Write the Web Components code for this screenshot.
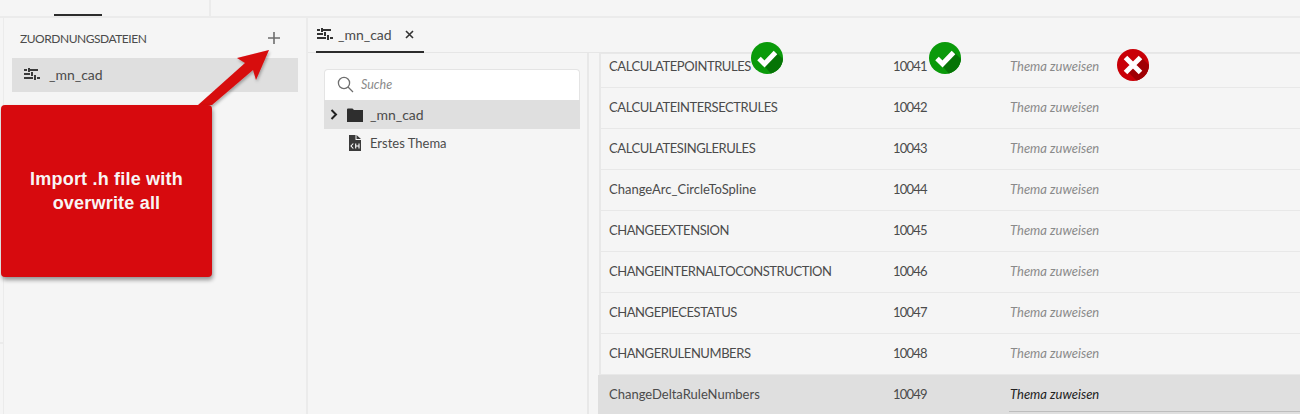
<!DOCTYPE html>
<html lang="de"><head><meta charset="utf-8"><title>Zuordnung</title>
<style>html,body{margin:0;padding:0;height:414px;overflow:hidden;background:#f5f5f5}</style></head>
<body>
<x-app></x-app>
<script>
const FONT = `"Lato","Noto Sans",sans-serif`;
const MAP = `<svg width="16" height="12" viewBox="0 0 16 12" fill="currentColor"><path d="M0 1h3v2H0zM4 0h2v4H4zM6 1h8v2H6zM0 5h6v2H0zM7 4h2v4H7zM0 9h9v2H0zM10 7h2v5h-2zM13 9h3v2h-3z"/></svg>`;
function def(name, css, html){
  customElements.define(name, class extends HTMLElement{
    constructor(){super();const r=this.attachShadow({mode:'open'});r.innerHTML=`<style>${css}</style>${typeof html==='function'?html(this):html}`;}
  });
}
def('x-topbar',`:host{display:flex;height:16px;border-bottom:2px solid #ebebeb;box-sizing:content-box}
 .a{width:54px}.t{width:48px;border-bottom:2px solid #2c2c2c}.b{width:107px;border-right:2px solid #ebebeb}`,
 `<div class="a"></div><div class="t"></div><div class="b"></div>`);
def('x-rail',`:host{display:block;width:3px;flex:none;padding-top:324px;box-sizing:border-box}div{height:2px;background:#ebebeb}`,`<div></div>`);
def('x-side-item',`:host{display:flex;align-items:center;height:34px;box-sizing:border-box;padding:0 0 2px 12px;margin:0 8px;background:#dfdfdf;color:#4b4b4b;font-size:14px;gap:9px}svg{display:block;color:#3a3a3a}`,
 `${MAP}<slot></slot>`);
def('x-sidebar',`:host{display:block;width:302px;border-left:1px solid #ebebeb;border-right:2px solid #ebebeb;box-sizing:content-box}
 header{display:flex;align-items:center;justify-content:space-between;height:40px;padding:0 26px 0 16px;color:#4b4b4b;font-size:12px;letter-spacing:-.47px}
 svg{display:block}`,
 `<header><span>ZUORDNUNGSDATEIEN</span><svg width="12" height="12" viewBox="0 0 12 12" fill="#6e6e6e"><path d="M5.200 0h1.600v12H5.200zM0 5.200h12v1.600H0z"/></svg></header><slot></slot>`);
def('x-tabbar',`:host{display:flex;height:34px;border-bottom:1px solid #e6e6e6;padding-left:8px}
 .tab{display:flex;align-items:center;gap:5px;width:108px;box-sizing:border-box;height:35px;border-bottom:2px solid #2c2c2c;color:#4b4b4b;font-size:14px;padding:0 0 1px 1px}
 .x{margin-left:8px;display:block}svg{display:block;color:#333}`,
 `<div class="tab">${MAP}<span>_mn_cad</span><svg class="x" width="9" height="9" viewBox="0 0 9 9" stroke="#333" stroke-width="1.600"><path d="M1 1l7 7M8 1l-7 7"/></svg></div>`);
def('x-search',`:host{display:flex;align-items:center;height:31px;box-sizing:border-box;margin:0 7px 0 16px;background:#fff;border:1px solid #e4e4e4;border-bottom:0;border-radius:4px 4px 0 0;padding:0 0 1px 12px;gap:7px;color:#8a8a8a;font-size:12.500px;font-style:italic}svg{display:block}`,
 `<svg width="17" height="17" viewBox="0 0 17 17" fill="none" stroke="#6e6e6e" stroke-width="1.300"><circle cx="7" cy="7" r="5.600"/><path d="M11 11l5 5"/></svg><span>Suche</span>`);
def('x-tree-item',`:host{display:flex;align-items:center;height:28px;margin:0 7px 0 16px;color:#4b4b4b;font-size:13px}
 :host([selected]){background:#dfdfdf;height:29px;font-size:14px}
 .c{width:20px;display:flex;justify-content:center;padding-right:2px}.i{width:18px;display:flex;justify-content:center;margin-right:6px}svg{display:block}`,
 el=>{const f=el.getAttribute('kind')==='folder';return `<div class="c">${f?`<svg width="8" height="11" viewBox="0 0 8 11" fill="none" stroke="#222" stroke-width="2"><path d="M1.500 1l4.500 4.500L1.500 10"/></svg>`:''}</div><div class="i">${f?`<svg width="16" height="14" viewBox="0 0 16 14" fill="#2e2e2e"><path d="M0 1.500Q0 .5 1 .5h4.500L7 2h9v12H0z"/></svg>`:`<svg width="12" height="16" viewBox="0 0 12 16"><path fill="#3a3a3a" d="M0 0h6.500v5H12V16H0zM7.500 0L12 4H7.500z"/><path d="M4.300 8.500L2 11l2.300 2.500M6.700 8.500v5M10 8.500v5M6.700 11H10" fill="none" stroke="#fff" stroke-width="1.100"/></svg>`}</div><slot></slot>`});
def('x-tree',`:host{display:block;width:279px;padding-top:16px;border-right:2px solid #e8e8e8;box-sizing:content-box}`,`<slot></slot>`);
def('x-row',`:host{display:grid;grid-template-columns:284px 117px 1fr;align-items:center;height:41px;box-sizing:border-box;border-bottom:1px solid #e8e8e8;padding:0 0 3px 8px;color:#4b4b4b;font-size:13px;position:relative}
 :host([first]){height:35px;padding-bottom:9px;border-top:1px solid #e8e8e8}
 :host([sel]){background:#dfdfdf;margin-left:-3px;padding:0 0 3px 11px;border-bottom:0}
 .n{letter-spacing:-.8px}
 :host([caps]) .m{letter-spacing:-.43px}
 .t{font-style:italic;color:#8a8a8a}:host([sel]) .t{color:#222}
 :host([sel])::after{content:"";position:absolute;left:411px;right:0;bottom:4px;height:1px;background:#bdbdbd}`,
 el=>`<span class="m">${el.getAttribute('name')}</span><span class="n">${el.getAttribute('num')}</span><span class="t">Thema zuweisen</span>`);
def('x-table',`:host{display:block;flex:1;margin-left:10px;border-left:2px solid #e8e8e8;min-width:0}`,`<slot></slot>`);
def('x-badge',`:host{position:absolute;display:block;width:32px;height:32px}svg{display:block}`,
 el=>el.getAttribute('kind')==='ok'
 ?`<svg width="32" height="32" viewBox="0 0 32 32"><defs><clipPath id="c"><circle cx="16" cy="16" r="16"/></clipPath></defs><circle cx="16" cy="16" r="16" fill="#0a9a0a"/><path clip-path="url(#c)" d="M13.500 24L25 10l14 14-14 14z" fill="#067406"/><path d="M8 16.500l5.500 5.500L24.500 10.500" fill="none" stroke="#fff" stroke-width="5"/></svg>`
 :`<svg width="32" height="32" viewBox="0 0 32 32"><defs><clipPath id="c"><circle cx="16" cy="16" r="16"/></clipPath></defs><circle cx="16" cy="16" r="16" fill="#c90007"/><path clip-path="url(#c)" d="M24 8l14 14-14 14-14-14z" fill="#a00004"/><path d="M8.500 8.500l15 15M23.500 8.500l-15 15" stroke="#fff" stroke-width="5"/></svg>`);
def('x-callout',`:host{position:absolute;left:1px;top:105px;width:211px;height:172px;background:#d70a0e;border-radius:4px;box-shadow:1px 3px 4px rgba(0,0,0,.4);color:#f8f4f4;font:bold 18px/24px "Liberation Sans",Arial,sans-serif;letter-spacing:.2px;display:flex;align-items:center;justify-content:center;text-align:center}`,`<slot></slot>`);
def('x-arrow',`:host{position:absolute;left:195px;top:48px;width:80px;height:60px;display:block}svg{display:block;overflow:visible}`,
 `<svg width="80" height="60" viewBox="0 0 80 60"><defs><filter id="s" x="-20%" y="-20%" width="140%" height="140%"><feDropShadow dx="1" dy="2" stdDeviation="1.500" flood-color="#000" flood-opacity=".3"/></filter></defs><path filter="url(#s)" fill="#d70a0e" d="M74 2L42 10 50 15 3 57 17 57 58 22 61 32z"/></svg>`);
def('x-app',`:host{display:block;width:1300px;height:414px;background:#f5f5f5;position:relative;overflow:hidden;font-family:${FONT}}
 .main{display:flex;height:396px}.content{flex:1;display:flex;flex-direction:column;min-width:0}.body{flex:1;display:flex;min-height:0;overflow:hidden}`,
 `<x-topbar></x-topbar><div class="main"><x-rail></x-rail><x-sidebar><x-side-item>_mn_cad</x-side-item></x-sidebar>
 <div class="content"><x-tabbar></x-tabbar><div class="body"><x-tree><x-search></x-search><x-tree-item kind="folder" selected>_mn_cad</x-tree-item><x-tree-item kind="doc">Erstes Thema</x-tree-item></x-tree>
 <x-table>
 <x-row first caps name="CALCULATEPOINTRULES" num="10041"></x-row>
 <x-row caps name="CALCULATEINTERSECTRULES" num="10042"></x-row>
 <x-row caps name="CALCULATESINGLERULES" num="10043"></x-row>
 <x-row name="ChangeArc_CircleToSpline" num="10044"></x-row>
 <x-row caps name="CHANGEEXTENSION" num="10045"></x-row>
 <x-row caps name="CHANGEINTERNALTOCONSTRUCTION" num="10046"></x-row>
 <x-row caps name="CHANGEPIECESTATUS" num="10047"></x-row>
 <x-row caps name="CHANGERULENUMBERS" num="10048"></x-row>
 <x-row sel name="ChangeDeltaRuleNumbers" num="10049"></x-row>
 </x-table></div></div></div>
 <x-arrow></x-arrow><x-callout>Import .h file with<br>overwrite all</x-callout>
 <x-badge kind="ok" style="left:751px;top:42px"></x-badge><x-badge kind="ok" style="left:929px;top:42px"></x-badge><x-badge kind="no" style="left:1117px;top:49px"></x-badge>`);
</script>
</body></html>
